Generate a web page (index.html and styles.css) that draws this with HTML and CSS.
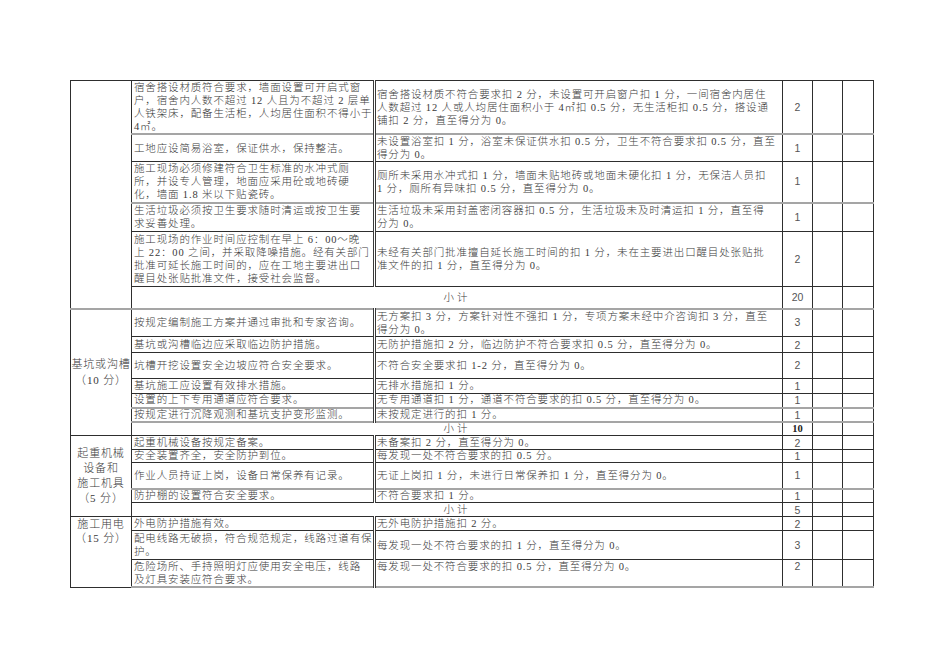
FILE: index.html
```html
<!DOCTYPE html>
<html lang="zh-CN">
<head>
<meta charset="utf-8">
<title>安全检查评分表</title>
<link rel="stylesheet" href="styles.css">
</head>
<body>
<div class="page">
<table class="sheet">
  <colgroup>
    <col class="w-cat"><col class="w-item"><col class="w-rule"><col class="w-score"><col class="w-blank"><col class="w-last">
  </colgroup>
  <tbody>
    <tr class="h53 gray">
      <td class="cat" rowspan="6"></td>
      <td>宿舍搭设材质符合要求，墙面设置可开启式窗<br>户，宿舍内人数不超过 12 人且为不超过 2 层单<br>人铁架床，配备生活柜，人均居住面积不得小于<br>4㎡。</td>
      <td class="rule">宿舍搭设材质不符合要求扣 2 分，未设置可开启窗户扣 1 分，一间宿舍内居住<br>人数超过 12 人或人均居住面积小于 4㎡扣 0.5 分，无生活柜扣 0.5 分，搭设通<br>铺扣 2 分，直至得分为 0。</td>
      <td class="score">2</td><td></td><td></td><td></td>
    </tr>
    <tr class="h27">
      <td>工地应设简易浴室，保证供水，保持整洁。</td>
      <td class="rule">未设置浴室扣 1 分，浴室未保证供水扣 0.5 分，卫生不符合要求扣 0.5 分，直至<br>得分为 0。</td>
      <td class="score">1</td><td></td><td></td><td></td>
    </tr>
    <tr class="h41 gray">
      <td>施工现场必须修建符合卫生标准的水冲式厕<br>所，并设专人管理，地面应采用砼或地砖硬<br>化，墙面 1.8 米以下贴瓷砖。</td>
      <td class="rule">厕所未采用水冲式扣 1 分，墙面未贴地砖或地面未硬化扣 1 分，无保洁人员扣<br>1 分，厕所有异味扣 0.5 分，直至得分为 0。</td>
      <td class="score">1</td><td></td><td></td><td></td>
    </tr>
    <tr class="h29">
      <td>生活垃圾必须按卫生要求随时清运或按卫生要<br>求妥善处理。</td>
      <td class="rule">生活垃圾未采用封盖密闭容器扣 0.5 分，生活垃圾未及时清运扣 1 分，直至得<br>分为 0。</td>
      <td class="score">1</td><td></td><td></td><td></td>
    </tr>
    <tr class="h55">
      <td>施工现场的作业时间应控制在早上 6：00～晚<br>上 22：00 之间，并采取降噪措施。经有关部门<br>批准可延长施工时间的，应在工地主要进出口<br>醒目处张贴批准文件，接受社会监督。</td>
      <td class="rule">未经有关部门批准擅自延长施工时间的扣 1 分，未在主要进出口醒目处张贴批<br>准文件的扣 1 分，直至得分为 0。</td>
      <td class="score">2</td><td></td><td></td><td></td>
    </tr>
    <tr class="h22 gray">
      <td class="sub" colspan="2">小计</td>
      <td class="score">20</td><td></td><td></td><td></td>
    </tr>

    <tr class="h28">
      <td class="cat" rowspan="7">基坑或沟槽<br>（10 分）</td>
      <td>按规定编制施工方案并通过审批和专家咨询。</td>
      <td class="rule">无方案扣 3 分，方案针对性不强扣 1 分，专项方案未经中介咨询扣 3 分，直至<br>得分为 0。</td>
      <td class="score">3</td><td></td><td></td><td></td>
    </tr>
    <tr class="h16 tight">
      <td>基坑或沟槽临边应采取临边防护措施。</td>
      <td class="rule">无防护措施扣 2 分，临边防护不符合要求扣 0.5 分，直至得分为 0。</td>
      <td class="score">2</td><td></td><td></td><td></td>
    </tr>
    <tr class="h26">
      <td>坑槽开挖设置安全边坡应符合安全要求。</td>
      <td class="rule">不符合安全要求扣 1-2 分，直至得分为 0。</td>
      <td class="score">2</td><td></td><td></td><td></td>
    </tr>
    <tr class="h15 tight">
      <td>基坑施工应设置有效排水措施。</td>
      <td class="rule">无排水措施扣 1 分。</td>
      <td class="score">1</td><td></td><td></td><td></td>
    </tr>
    <tr class="h14 tight gray">
      <td>设置的上下专用通道应符合要求。</td>
      <td class="rule">无专用通道扣 1 分，通道不符合要求的扣 0.5 分，直至得分为 0。</td>
      <td class="score">1</td><td></td><td></td><td></td>
    </tr>
    <tr class="h14 tight gray">
      <td>按规定进行沉降观测和基坑支护变形监测。</td>
      <td class="rule">未按规定进行的扣 1 分。</td>
      <td class="score">1</td><td></td><td></td><td></td>
    </tr>
    <tr class="h14 tight">
      <td class="sub" colspan="2">小计</td>
      <td class="score bold">10</td><td></td><td></td><td></td>
    </tr>

    <tr class="h14 tight">
      <td class="cat crane" rowspan="5">起重机械<br>设备和<br>施工机具<br>（5 分）</td>
      <td>起重机械设备按规定备案。</td>
      <td class="rule">未备案扣 2 分，直至得分为 0。</td>
      <td class="score">2</td><td></td><td></td><td></td>
    </tr>
    <tr class="h13 tight">
      <td>安全装置齐全，安全防护到位。</td>
      <td class="rule">每发现一处不符合要求的扣 0.5 分。</td>
      <td class="score">1</td><td></td><td></td><td></td>
    </tr>
    <tr class="h26 gray">
      <td>作业人员持证上岗，设备日常保养有记录。</td>
      <td class="rule">无证上岗扣 1 分，未进行日常保养扣 1 分，直至得分为 0。</td>
      <td class="score">1</td><td></td><td></td><td></td>
    </tr>
    <tr class="h14 tight">
      <td>防护棚的设置符合安全要求。</td>
      <td class="rule">不符合要求扣 1 分。</td>
      <td class="score">1</td><td></td><td></td><td></td>
    </tr>
    <tr class="h14 tight">
      <td class="sub" colspan="2">小计</td>
      <td class="score">5</td><td></td><td></td><td></td>
    </tr>

    <tr class="h14 tight">
      <td class="cat top" rowspan="3">施工用电<br>（15 分）</td>
      <td>外电防护措施有效。</td>
      <td class="rule">无外电防护措施扣 2 分。</td>
      <td class="score">2</td><td></td><td></td><td></td>
    </tr>
    <tr class="h29">
      <td>配电线路无破损，符合规范规定，线路过道有保<br>护。</td>
      <td class="rule">每发现一处不符合要求的扣 1 分，直至得分为 0。</td>
      <td class="score">3</td><td></td><td></td><td></td>
    </tr>
    <tr class="h26 gray top-row">
      <td>危险场所、手持照明灯应使用安全电压，线路<br>及灯具安装应符合要求。</td>
      <td class="rule">每发现一处不符合要求的扣 0.5 分，直至得分为 0。</td>
      <td class="score">2</td><td></td><td></td><td></td>
    </tr>
  </tbody>
</table>
</div>
</body>
</html>
```

FILE: styles.css
```css
html, body {
  margin: 0;
  padding: 0;
  background: #ffffff;
}

.page {
  padding: 80px 0 0 70px;
}

.sheet {
  border-collapse: collapse;
  table-layout: fixed;
  width: 803px;
  font-family: "Liberation Serif", "Noto Sans CJK SC", serif;
  font-weight: 300;
  font-size: 10.5px;
  line-height: 13px;
  letter-spacing: 0.85px;
  color: #3a3a3a;
}

.w-cat { width: 61px; }
.w-item { width: 243px; }
.w-rule { width: 408px; }
.w-score { width: 30px; }
.w-blank { width: 30px; }
.w-last { width: 31px; }

.sheet td {
  border: 1px solid #2e2e2e;
  padding: 0 0 0 2px;
  vertical-align: middle;
  white-space: nowrap;
  overflow: hidden;
}

.sheet tr.tight > td {
  line-height: 12px;
}

.sheet td.rule {
  border-left: 3px double #3a3a3a;
  padding-left: 1px;
}

.sheet td.cat {
  text-align: center;
  padding: 0;
  line-height: 16px;
  font-size: 11px;
}

.sheet td.cat.crane {
  line-height: 15px;
}

.sheet td.cat.top {
  vertical-align: top;
  line-height: 14px;
}

.sheet td.sub {
  text-align: center;
  padding: 0;
  letter-spacing: 3px;
}

.sheet td.score {
  text-align: center;
  padding: 0;
  letter-spacing: 0;
  font-family: "Liberation Sans", "Noto Sans CJK SC", sans-serif;
  color: #555;
}

.sheet td.score.bold {
  font-family: "Liberation Serif", serif;
  font-weight: 700;
  color: #222;
}

.sheet tr.gray > td {
  border-bottom: 2px solid #a5a5a5;
}

.sheet tr.top-row > td {
  vertical-align: top;
}

.h13 { height: 13px; }
.h14 { height: 14px; }
.h15 { height: 15px; }
.h16 { height: 16px; }
.h22 { height: 22px; }
.h26 { height: 26px; }
.h27 { height: 27px; }
.h28 { height: 28px; }
.h29 { height: 29px; }
.h41 { height: 41px; }
.h53 { height: 53px; }
.h55 { height: 55px; }
```
